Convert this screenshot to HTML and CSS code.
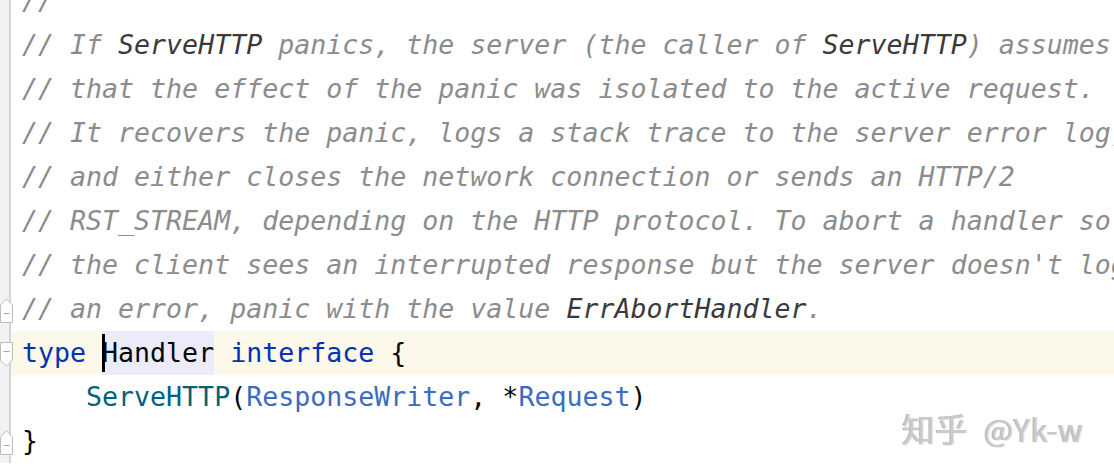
FILE: index.html
```html
<!DOCTYPE html>
<html>
<head>
<meta charset="utf-8">
<link rel="stylesheet" href="styles.css">
</head>
<body>
<div class="editor">
  <div class="lines">
    <div class="line"><div class="gutter"></div><div class="code"><span class="c">//</span></div></div>
    <div class="line"><div class="gutter"></div><div class="code"><span class="c">// If <span class="cref">ServeHTTP</span> panics, the server (the caller of <span class="cref">ServeHTTP</span>) assumes</span></div></div>
    <div class="line"><div class="gutter"></div><div class="code"><span class="c">// that the effect of the panic was isolated to the active request.</span></div></div>
    <div class="line"><div class="gutter"></div><div class="code"><span class="c">// It recovers the panic, logs a stack trace to the server error log,</span></div></div>
    <div class="line"><div class="gutter"></div><div class="code"><span class="c">// and either closes the network connection or sends an HTTP/2</span></div></div>
    <div class="line"><div class="gutter"></div><div class="code"><span class="c">// RST_STREAM, depending on the HTTP protocol. To abort a handler so</span></div></div>
    <div class="line"><div class="gutter"></div><div class="code"><span class="c">// the client sees an interrupted response but the server doesn't log</span></div></div>
    <div class="line"><div class="gutter"><svg class="fold" width="13" height="25" viewBox="0 0 13 25"><path d="M0.5 7 L6.5 0.8 L12.5 7 V24.5 H0.5 Z" fill="#fff" stroke="#bdbdbd"/><path d="M3.5 15.5 H9.5" stroke="#a8a8a8"/></svg></div><div class="code"><span class="c">// an error, panic with the value <span class="cref">ErrAbortHandler</span>.</span></div></div>
    <div class="line current"><div class="gutter"><svg class="fold" width="13" height="25" viewBox="0 0 13 25"><path d="M0.5 0.5 H12.5 V18 L6.5 24.2 L0.5 18 Z" fill="#fff" stroke="#bdbdbd"/><path d="M3.5 9.5 H9.5" stroke="#a8a8a8"/></svg></div><div class="code"><span class="kw">type</span> <span class="ident"><span class="caret"></span>Handler</span> <span class="kw">interface</span> {</div></div>
    <div class="line"><div class="gutter"></div><div class="code">    <span class="fn">ServeHTTP</span>(<span class="ty">ResponseWriter</span>, *<span class="ty">Request</span>)</div></div>
    <div class="line"><div class="gutter"><svg class="fold" width="13" height="25" viewBox="0 0 13 25"><path d="M0.5 7 L6.5 0.8 L12.5 7 V24.5 H0.5 Z" fill="#fff" stroke="#bdbdbd"/><path d="M3.5 15.5 H9.5" stroke="#a8a8a8"/></svg></div><div class="code">}</div></div>
  </div>
  <div class="watermark"><span class="wm-cn">知乎</span><span class="wm-en">@Yk-w</span></div>
</div>
</body>
</html>
```

FILE: styles.css
```css
html, body {
  margin: 0;
  padding: 0;
  background: #ffffff;
  overflow: hidden;
}

.editor {
  position: relative;
  width: 1114px;
  height: 476px;
  overflow: hidden;
  background: #ffffff;
}

.lines {
  display: flex;
  flex-direction: column;
  margin-top: -21px;
}

.line {
  display: flex;
  height: 44px;
}

.gutter {
  position: relative;
  flex: 0 0 9px;
  width: 9px;
  background: #f2f2f2;
  border-right: 2px solid #d4d4d4;
}

.fold {
  position: absolute;
  left: 0;
  top: 11px;
  display: block;
}

.code {
  flex: 1;
  padding-left: 11px;
  white-space: pre;
  overflow: hidden;
  font-family: "DejaVu Sans Mono", "Liberation Mono", monospace;
  font-size: 26.6px;
  line-height: 44px;
  color: #080808;
}

.current .code {
  background: #fcf8ea;
}

.c {
  color: #8c8c8c;
  font-style: italic;
}

.cref {
  color: #3a3a3a;
}

.kw {
  color: #0033b3;
}

.fn {
  color: #00627a;
}

.ty {
  color: #3b6cc0;
}

.ident {
  position: relative;
  display: inline-block;
  background: #ebebfa;
  color: #080808;
}

.caret {
  position: absolute;
  left: 0;
  top: 3px;
  width: 3px;
  height: 38px;
  background: #000000;
}

.watermark {
  position: absolute;
  left: 902px;
  top: 404px;
  display: flex;
  align-items: baseline;
  gap: 16px;
  font-family: "Noto Sans CJK SC", "Noto Sans", sans-serif;
  color: #cacaca;
  text-shadow: -1px 0 0 #b4b4b4, 1px 1px 0 #eeeeee;
  white-space: pre;
}

.wm-cn {
  font-size: 33px;
}

.wm-en {
  font-size: 31px;
  letter-spacing: 0.5px;
}
```
